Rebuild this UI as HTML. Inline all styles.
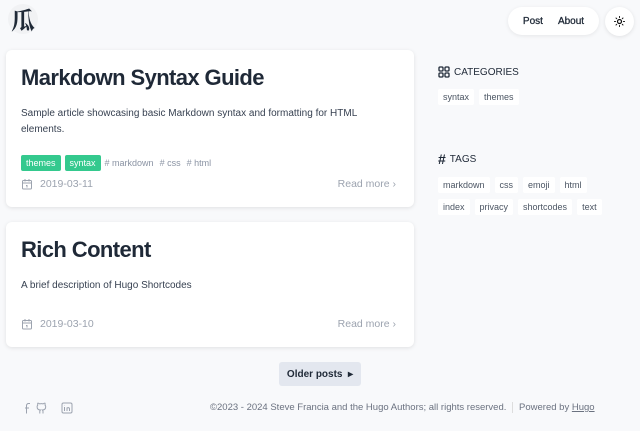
<!DOCTYPE html>
<html><head><meta charset="utf-8"><style>
*{box-sizing:border-box;margin:0;padding:0}
body{width:640px;height:431px;background:#f8f9fb;font-family:"Liberation Sans",sans-serif;color:#1f2937;position:relative;overflow:hidden}
.abs{position:absolute}
.card{position:absolute;left:6px;width:408px;background:#fff;border-radius:6px;box-shadow:0 1px 4px rgba(0,0,0,.1)}
h2{position:absolute;left:15px;font-size:22px;font-weight:bold;color:#1f2937;letter-spacing:-.6px}
.desc{position:absolute;left:15px;font-size:10px;line-height:16px;color:#374151;width:360px}
.tag{display:inline-block;background:#34c98e;color:#fff;font-size:9px;padding:3px 5px;border-radius:2px;margin-right:4px}
.ht{font-size:9px;color:#8a93a3;margin-right:6px}
.meta{position:absolute;left:15px;right:18px;font-size:10.5px;color:#9ca3af;display:flex;justify-content:space-between;align-items:center}
.meta span{display:flex;align-items:center;gap:7px}
.chip{display:inline-block;background:#fff;font-size:9px;color:#4b5563;padding:3px 5px;margin-right:5px;margin-bottom:4px;border-radius:2px}
.sh{font-size:10px;color:#1f2937;display:flex;align-items:center;gap:4px}
</style></head><body>
<div class="abs" style="left:8px;top:4px;width:30px;height:30px;border-radius:50%;background:#f1f2f4;font-family:'Noto Serif CJK SC',serif;font-size:24px;line-height:30px;text-align:center;font-weight:bold">瓜</div>
<div class="abs" style="left:508px;top:7px;width:91px;height:28px;border-radius:14px;background:#fff;box-shadow:0 1px 4px rgba(0,0,0,.08);font-size:10px;display:flex;align-items:center;justify-content:center;gap:15px;-webkit-text-stroke:.3px #1f2937"><span>Post</span><span>About</span></div>
<div class="abs" style="left:605px;top:7px;width:29px;height:29px;border-radius:50%;background:#fff;box-shadow:0 1px 4px rgba(0,0,0,.1)"><svg width="29" height="29" viewBox="0 0 29 29"><circle cx="14.5" cy="14.5" r="2" fill="none" stroke="#111" stroke-width="1.2"/><g stroke="#111" stroke-width="1" stroke-linecap="round"><path d="M14.5 9.5v1M14.5 18.5v1M9.5 14.5h1M18.5 14.5h1M11 11l.7.7M17.3 17.3l.7.7M11 18l.7-.7M17.3 11.7l.7-.7"/></g></svg></div>

<div class="card" style="top:50px;height:157px">
<h2 style="top:15px">Markdown Syntax Guide</h2>
<div class="desc" style="top:56px">Sample article showcasing basic Markdown syntax and formatting for HTML elements.</div>
<div class="abs" style="left:15px;top:103px"><span class="tag">themes</span><span class="tag">syntax</span><span class="ht"># markdown</span><span class="ht"># css</span><span class="ht"># html</span></div>
<div class="meta" style="top:128px"><span><svg width="12" height="12" viewBox="0 0 12 12" fill="none" stroke="#9ca3af" stroke-width="1"><rect x="1.5" y="2.5" width="9" height="8.5" rx="1"/><path d="M1.5 5h9M4 1v2.5M8 1v2.5M5 7.5h1v2"/></svg>2019-03-11</span><span>Read more ›</span></div>
</div>
<div class="card" style="top:222px;height:125px">
<h2 style="top:15px">Rich Content</h2>
<div class="desc" style="top:56px">A brief description of Hugo Shortcodes</div>
<div class="meta" style="top:96px"><span><svg width="12" height="12" viewBox="0 0 12 12" fill="none" stroke="#9ca3af" stroke-width="1"><rect x="1.5" y="2.5" width="9" height="8.5" rx="1"/><path d="M1.5 5h9M4 1v2.5M8 1v2.5M5 7.5h1v2"/></svg>2019-03-10</span><span>Read more ›</span></div>
</div>

<div class="abs" style="left:438px;top:66px"><div class="sh"><svg width="12" height="12" viewBox="0 0 12 12" fill="none" stroke="#1f2937" stroke-width="1.3"><rect x="1" y="1" width="4" height="4" rx="1"/><rect x="7" y="1" width="4" height="4" rx="1"/><rect x="1" y="7" width="4" height="4" rx="1"/><rect x="7" y="7" width="4" height="4" rx="1"/></svg> CATEGORIES</div>
<div style="margin-top:9px"><span class="chip">syntax</span><span class="chip">themes</span></div></div>
<div class="abs" style="left:438px;top:151px;width:180px"><div class="sh"><b style="font-size:14px">#</b> TAGS</div>
<div style="margin-top:8px"><span class="chip">markdown</span><span class="chip">css</span><span class="chip">emoji</span><span class="chip">html</span><br><span class="chip">index</span><span class="chip">privacy</span><span class="chip">shortcodes</span><span class="chip">text</span></div></div>

<div class="abs" style="left:279px;top:362px;width:82px;height:24px;background:#e3e7ef;border-radius:3px;font-size:10px;font-weight:bold;display:flex;align-items:center;justify-content:center">Older posts&nbsp;&nbsp;▸</div>
<svg class="abs" style="left:22px;top:401px" width="52" height="14" viewBox="0 0 52 14" fill="none" stroke="#9ca3af" stroke-width="1"><path d="M8 2.5h-1.5a2 2 0 0 0-2 2v8M3 7h4"/><path d="M21 12.5v-2a2 2 0 0 0-.6-1.5c2 0 3.3-1 3.3-3.2a2.6 2.6 0 0 0-.7-1.8 2.4 2.4 0 0 0 0-1.8s-.6-.2-1.9.7a6.5 6.5 0 0 0-3.4 0c-1.3-.9-1.9-.7-1.9-.7a2.4 2.4 0 0 0 0 1.8 2.6 2.6 0 0 0-.7 1.8c0 2.2 1.3 3.2 3.3 3.2a2 2 0 0 0-.6 1.5v2"/><rect x="40" y="2" width="10" height="10" rx="1.5"/><path d="M42.5 6v4M42.5 4.2v.3M45 10V6.5M45 7.5c0-1 2.5-1.5 2.5.5V10"/></svg>
<div class="abs" style="left:210px;top:402px;font-size:9.5px;color:#6b7280">©2023 - 2024 Steve Francia and the Hugo Authors; all rights reserved. <span style="border-left:1px solid #ddd;padding-left:6px;margin-left:3px">Powered by <u>Hugo</u></span></div>
</body></html>
